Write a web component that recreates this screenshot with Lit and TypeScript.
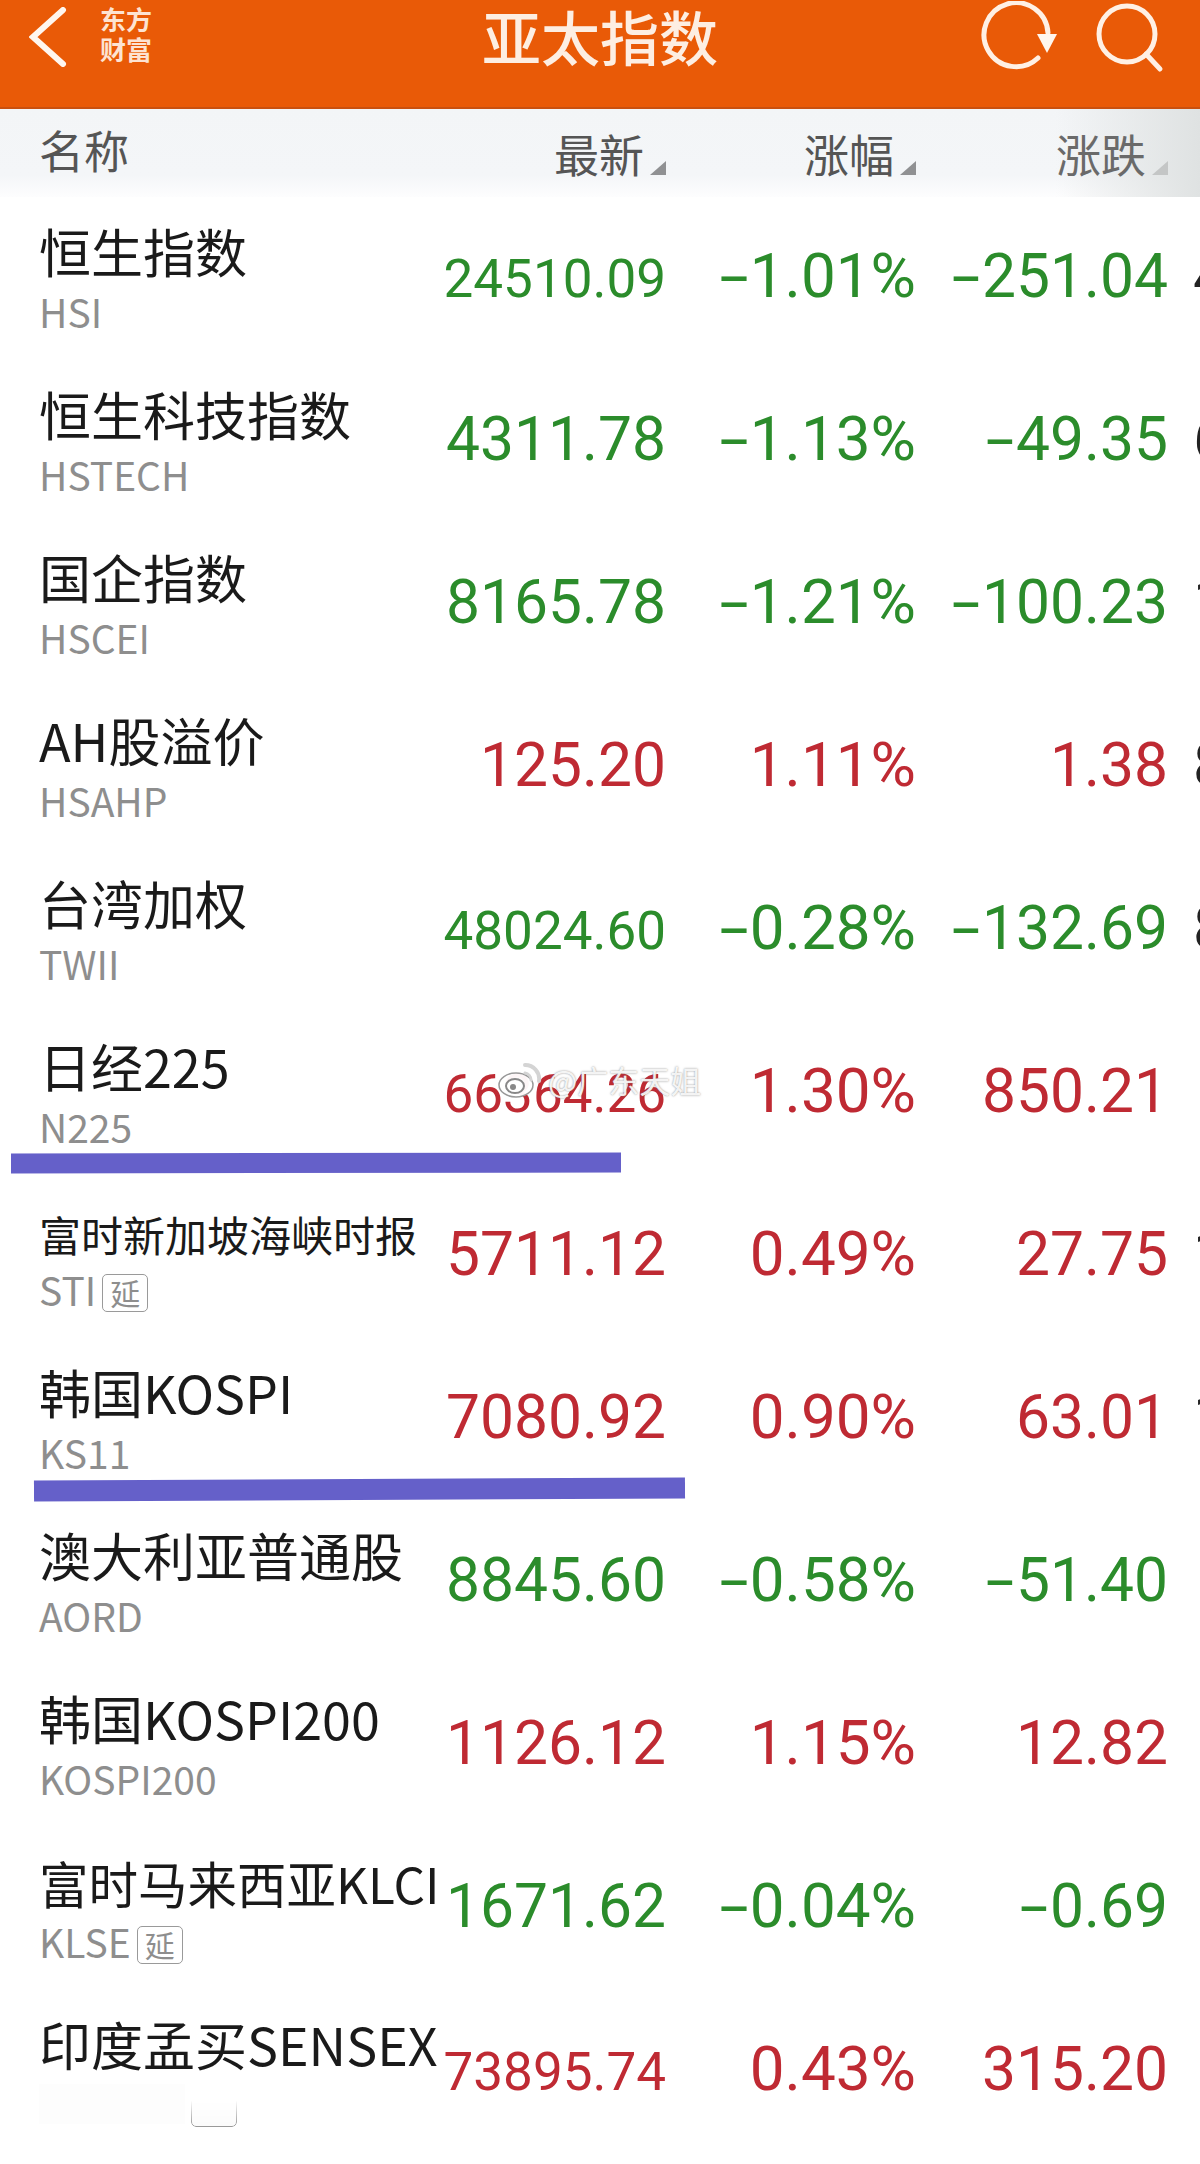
import { LitElement, html, css } from "lit";
import { customElement } from "lit/decorators.js";

interface Row {
  name: string;
  code: string;
  a: string;
  b: string;
  c: string;
  up: boolean;
  next: string;
  fit?: string;
  wide?: boolean;
  delay?: boolean;
  hidden?: boolean;
}

const rows: Row[] = [
  { name: "恒生指数", code: "HSI", a: "24510.09", b: "-1.01%", c: "-251.04", up: false, next: "4", wide: true },
  { name: "恒生科技指数", code: "HSTECH", a: "4311.78", b: "-1.13%", c: "-49.35", up: false, next: "6" },
  { name: "国企指数", code: "HSCEI", a: "8165.78", b: "-1.21%", c: "-100.23", up: false, next: "1" },
  { name: "AH股溢价", code: "HSAHP", a: "125.20", b: "1.11%", c: "1.38", up: true, next: "8" },
  { name: "台湾加权", code: "TWII", a: "48024.60", b: "-0.28%", c: "-132.69", up: false, next: "8", wide: true },
  { name: "日经225", code: "N225", a: "66364.26", b: "1.30%", c: "850.21", up: true, next: "", wide: true },
  { name: "富时新加坡海峡时报", code: "STI", a: "5711.12", b: "0.49%", c: "27.75", up: true, next: "1", fit: "xs", delay: true },
  { name: "韩国KOSPI", code: "KS11", a: "7080.92", b: "0.90%", c: "63.01", up: true, next: "1" },
  { name: "澳大利亚普通股", code: "AORD", a: "8845.60", b: "-0.58%", c: "-51.40", up: false, next: "" },
  { name: "韩国KOSPI200", code: "KOSPI200", a: "1126.12", b: "1.15%", c: "12.82", up: true, next: "" },
  { name: "富时马来西亚KLCI", code: "KLSE", a: "1671.62", b: "-0.04%", c: "-0.69", up: false, next: "", fit: "sm", delay: true },
  { name: "印度孟买SENSEX", code: "", a: "73895.74", b: "0.43%", c: "315.20", up: true, next: "", wide: true, hidden: true },
];

@customElement("app-root")
export class AppRoot extends LitElement {
  static styles = css`
    :host {
      display: block;
      width: 1200px;
      height: 2164px;
      overflow: hidden;
      position: relative;
      background: #fff;
      font-family: "Noto Sans CJK SC", "Noto Sans", sans-serif;
    }
    .top {
      height: 109px;
      box-sizing: border-box;
      background: #e95a07;
      border-bottom: 2px solid #c9500f;
      display: flex;
      align-items: flex-start;
      color: #fdeee2;
    }
    .side {
      flex: 1 1 400px;
      display: flex;
      align-items: flex-start;
      box-sizing: border-box;
    }
    .side.right {
      justify-content: flex-end;
      gap: 28px;
      padding-right: 34px;
    }
    .back {
      margin: 7px 0 0 29px;
      display: block;
    }
    .logo {
      margin: 4px 0 0 31px;
      font-size: 26px;
      line-height: 30px;
      font-weight: 700;
      width: 54px;
      color: #fde3d2;
    }
    .title {
      font-size: 59px;
      line-height: 74px;
      font-weight: 500;
      white-space: nowrap;
      margin-top: -1px;
    }
    .ico {
      display: block;
      margin-top: 1px;
    }
    .head {
      height: 88px;
      display: flex;
      background: linear-gradient(90deg, rgba(255, 255, 255, 0) 88%, #dfe2e2 100%),
        linear-gradient(180deg, #f3f5f7 0%, #f4f6f8 75%, #fdfdfe 100%);
      color: #555;
      font-size: 45px;
      line-height: 60px;
    }
    .head .nm {
      width: 440px;
      box-sizing: border-box;
      padding: 11px 0 0 39px;
    }
    .hgrid {
      display: grid;
      grid-template-columns: 226px 250px 252px;
    }
    .hc {
      display: flex;
      justify-content: flex-end;
      padding-top: 15px;
      height: 60px;
    }
    .tri {
      width: 16px;
      height: 14px;
      margin: 37px 0 0 6px;
      background: #909193;
      clip-path: polygon(100% 0, 100% 100%, 0 100%);
    }
    .hc.fade {
      color: #6a6a6a;
    }
    .hc.fade .tri {
      background: #c4c6c6;
    }
    .row {
      height: 163px;
      display: flex;
    }
    .who {
      width: 440px;
      box-sizing: border-box;
      padding: 24px 0 0 39px;
      flex: none;
    }
    .name {
      height: 60px;
      line-height: 60px;
      font-size: 52px;
      color: #1a1a1a;
      white-space: nowrap;
    }
    .name.xs {
      font-size: 42px;
      padding-top: 10px;
      height: 50px;
      line-height: 50px;
    }
    .name.sm {
      font-size: 49.5px;
      padding-top: 3px;
      height: 57px;
      line-height: 57px;
    }
    .sub {
      height: 44px;
      margin-top: 8px;
      display: flex;
      align-items: center;
      gap: 6px;
      font-size: 39px;
      line-height: 44px;
      color: #8e8e8e;
    }
    .tag {
      width: 46px;
      height: 38px;
      box-sizing: border-box;
      border: 1px solid #9a9a9a;
      border-radius: 5px;
      font-size: 30px;
      line-height: 35px;
      text-align: center;
      color: #8e8e8e;
      margin-top: 8px;
    }
    .smudge {
      width: 146px;
      height: 40px;
      background: #fdfdfd;
    }
    .tag.ghost {
      background: #fbfbfb;
      mask-image: linear-gradient(180deg, transparent 30%, #000 95%);
      -webkit-mask-image: linear-gradient(180deg, transparent 30%, #000 95%);
    }
    .nums {
      flex: none;
      display: grid;
      grid-template-columns: 226px 250px 252px 60px;
      align-items: baseline;
      height: 80px;
      margin-top: 39px;
      font-family: Roboto, "Liberation Sans", sans-serif;
      font-size: 60.5px;
      line-height: 80px;
      white-space: nowrap;
    }
    .num {
      text-align: right;
    }
    .num.wide {
      font-size: 53px;
    }
    .num.pct {
      font-size: 62px;
    }
    .up {
      color: #bf2a33;
    }
    .down {
      color: #2b8c2b;
    }
    .minus {
      display: inline-block;
      width: 32px;
      text-align: center;
      transform: scaleX(1.7);
    }
    .next {
      color: #222;
      padding-left: 25px;
    }
    .bar {
      position: absolute;
      height: 20px;
      background: #6560c9;
    }
    .bar.one {
      left: 11px;
      top: 1153px;
      width: 610px;
      transform: rotate(-0.08deg);
    }
    .bar.two {
      left: 34px;
      top: 1479px;
      width: 651px;
      height: 21px;
      transform: rotate(-0.26deg);
    }
    .mark {
      position: absolute;
      left: 498px;
      top: 1062px;
      display: flex;
      align-items: center;
      gap: 6px;
      font-size: 31px;
      line-height: 36px;
      color: rgba(255, 255, 255, 0.9);
      text-shadow: 0 0 2px rgba(110, 110, 110, 0.8);
      white-space: nowrap;
    }
  `;

  private value(v: string) {
    return v.startsWith("-") ? html`<span class="minus">-</span>${v.slice(1)}` : v;
  }

  private renderRow(r: Row) {
    const tone = r.up ? "up" : "down";
    return html`<div class="row">
      <div class="who">
        <div class="name ${r.fit ?? ""}">${r.name}</div>
        <div class="sub">
          ${r.hidden
            ? html`<div class="smudge"></div>
                <div class="tag ghost"></div>`
            : html`<span>${r.code}</span>${r.delay ? html`<div class="tag">延</div>` : ""}`}
        </div>
      </div>
      <div class="nums">
        <div class="num ${tone} ${r.wide ? "wide" : ""}">${this.value(r.a)}</div>
        <div class="num pct ${tone}">${this.value(r.b)}</div>
        <div class="num ${tone}">${this.value(r.c)}</div>
        <div class="next">${r.next}</div>
      </div>
    </div>`;
  }

  render() {
    return html`
      <div class="top">
        <div class="side">
          <svg class="back" width="40" height="60" viewBox="0 0 40 60" fill="none">
            <path d="M34 3 L4 30 L34 57" stroke="#fff6ee" stroke-width="6" stroke-linecap="round" stroke-linejoin="miter" />
          </svg>
          <div class="logo">东方<br />财富</div>
        </div>
        <div class="title">亚太指数</div>
        <div class="side right">
          <svg class="ico" width="90" height="76" viewBox="0 0 90 76" fill="none">
            <path d="M62 57 A32 32 0 1 1 72 32" stroke="#fff0e4" stroke-width="5" stroke-linecap="round" />
            <path d="M61 33 L81 33 L71 52 Z" fill="#fff6ee" />
          </svg>
          <svg class="ico" width="72" height="72" viewBox="0 0 72 72" fill="none">
            <circle cx="33" cy="33" r="28" stroke="#fff0e4" stroke-width="5" />
            <path d="M52 53 L66 68" stroke="#fff0e4" stroke-width="5" stroke-linecap="round" />
          </svg>
        </div>
      </div>
      <div class="head">
        <div class="nm">名称</div>
        <div class="hgrid">
          <div class="hc"><span>最新</span><i class="tri"></i></div>
          <div class="hc"><span>涨幅</span><i class="tri"></i></div>
          <div class="hc fade"><span>涨跌</span><i class="tri"></i></div>
        </div>
      </div>
      ${rows.map((r) => this.renderRow(r))}
      <div class="bar one"></div>
      <div class="bar two"></div>
      <div class="mark">
        <svg width="44" height="36" viewBox="0 0 44 36" fill="none">
          <ellipse cx="18" cy="23" rx="17" ry="12" fill="rgba(255,255,255,0.96)" stroke="#999" stroke-width="1.5" />
          <ellipse cx="17" cy="24" rx="9" ry="7" fill="#fff" stroke="#888" stroke-width="2" />
          <circle cx="15" cy="25" r="3" fill="#888" />
          <path d="M27 3 A14 14 0 0 1 41 19" stroke="#d4d4d4" stroke-width="4" stroke-linecap="round" />
          <path d="M27 11 A7 7 0 0 1 33 18" stroke="#d4d4d4" stroke-width="3" stroke-linecap="round" />
        </svg>
        <span>@广东天姐</span>
      </div>
    `;
  }
}
